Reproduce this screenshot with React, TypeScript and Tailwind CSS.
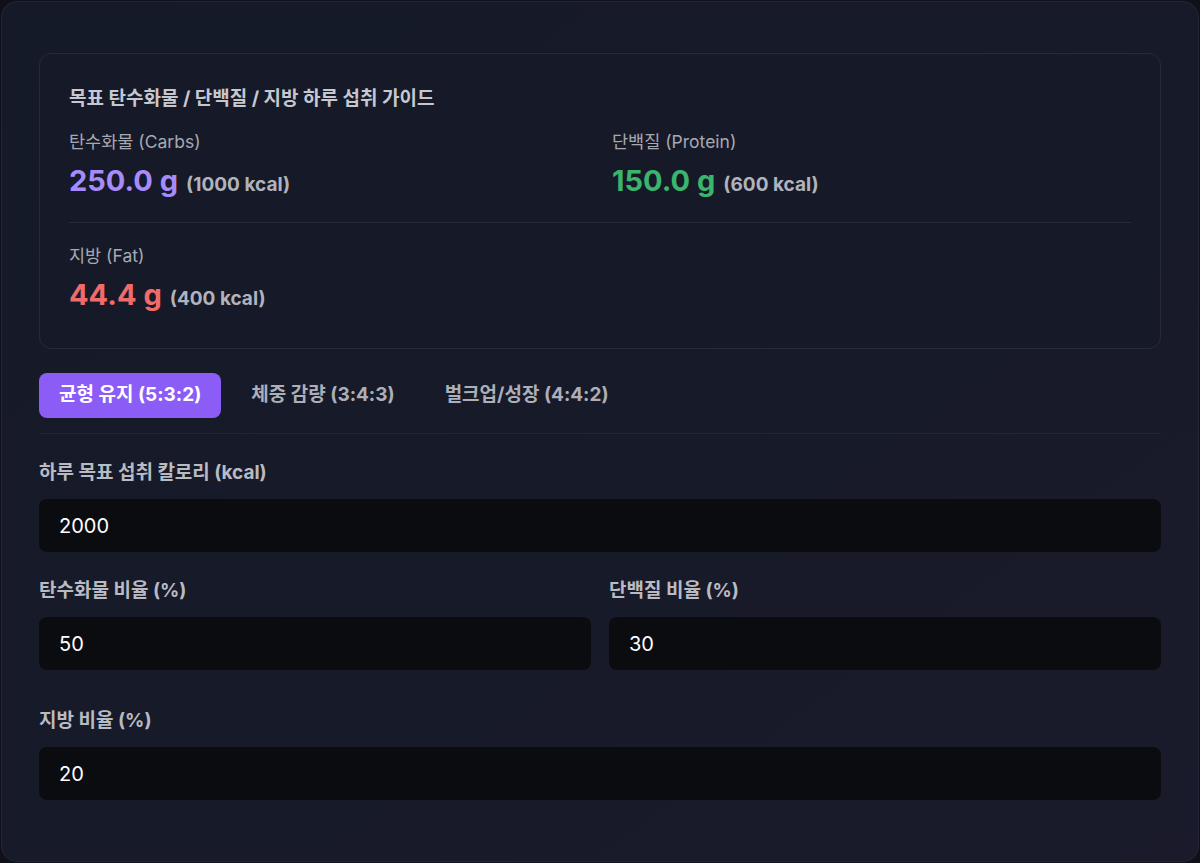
import React, { useState } from "react";

const font = { fontFamily: '"Inter", "Noto Sans CJK KR", "Noto Sans", sans-serif' };

type Preset = { label: string; c: number; p: number; f: number };

const presets: Preset[] = [
  { label: "균형 유지 (5:3:2)", c: 50, p: 30, f: 20 },
  { label: "체중 감량 (3:4:3)", c: 30, p: 40, f: 30 },
  { label: "벌크업/성장 (4:4:2)", c: 40, p: 40, f: 20 },
];

function Macro({ name, grams, kcal, color }: { name: string; grams: number; kcal: number; color: string }) {
  return (
    <div className="flex flex-col">
      <span className="text-[17.5px] leading-7 text-[#a7a9b2]">{name}</span>
      <div className="mt-[7px] flex items-baseline gap-2">
        <span className={`text-[29px] font-bold leading-9 ${color}`}>{grams.toFixed(1)} g</span>
        <span className="text-[19px] font-bold text-[#b1b3bc]">({Math.round(kcal)} kcal)</span>
      </div>
    </div>
  );
}

function Field({ label, value, onChange }: { label: string; value: string; onChange: (v: string) => void }) {
  return (
    <label className="flex flex-col">
      <span className="text-[19px] font-bold leading-7 text-[#b9bbc3]">{label}</span>
      <input
        value={value}
        onChange={(e) => onChange(e.target.value)}
        className="mt-3 h-[53px] w-full rounded-lg bg-[#0b0c10] px-5 text-[20px] text-white outline-none"
      />
    </label>
  );
}

export default function App() {
  const [active, setActive] = useState(0);
  const [kcal, setKcal] = useState("2000");
  const [c, setC] = useState("50");
  const [p, setP] = useState("30");
  const [f, setF] = useState("20");

  const total = Number(kcal) || 0;
  const carbK = (total * (Number(c) || 0)) / 100;
  const protK = (total * (Number(p) || 0)) / 100;
  const fatK = (total * (Number(f) || 0)) / 100;

  const pick = (i: number) => {
    setActive(i);
    setC(String(presets[i].c));
    setP(String(presets[i].p));
    setF(String(presets[i].f));
  };

  return (
    <div className="min-h-[863px] bg-[#0f1019] p-px" style={font}>
      <div className="min-h-[861px] rounded-2xl border border-[#22253a] bg-gradient-to-br from-[#151a28] via-[#171a29] to-[#1a1a2b] px-[37px] pb-[60px] pt-[51px]">
        {/* macro summary */}
        <div className="rounded-xl border border-[#262a3b] bg-[#161a28] px-[29px] pb-[35px] pt-[31px]">
          <h2 className="text-[19px] font-bold leading-7 text-[#c7c8cf]">목표 탄수화물 / 단백질 / 지방 하루 섭취 가이드</h2>
          <div className="mt-[15px] grid grid-cols-2 gap-x-6">
            <div className="pb-[22px]">
              <Macro name="탄수화물 (Carbs)" grams={carbK / 4} kcal={carbK} color="text-[#a78bfa]" />
            </div>
            <div className="pb-[22px]">
              <Macro name="단백질 (Protein)" grams={protK / 4} kcal={protK} color="text-[#3bb56c]" />
            </div>
            <div className="col-span-2 border-t border-[#262a3a] pt-[19px]">
              <Macro name="지방 (Fat)" grams={fatK / 9} kcal={fatK} color="text-[#f26b6b]" />
            </div>
          </div>
        </div>

        {/* preset tabs */}
        <div className="mt-[24px] flex gap-[10px] border-b border-[#23263a] pb-[15px]">
          {presets.map((pr, i) => (
            <button
              key={pr.label}
              onClick={() => pick(i)}
              className={`h-[45px] rounded-lg px-5 text-[19px] font-bold ${
                i === active ? "bg-[#8b5cf6] text-white" : "text-[#adafb8]"
              }`}
            >
              {pr.label}
            </button>
          ))}
        </div>

        <div className="mt-[25px] flex flex-col">
          <Field label="하루 목표 섭취 칼로리 (kcal)" value={kcal} onChange={setKcal} />
          <div className="mt-[25px] grid grid-cols-2 gap-[18px]">
            <Field label="탄수화물 비율 (%)" value={c} onChange={setC} />
            <Field label="단백질 비율 (%)" value={p} onChange={setP} />
          </div>
          <div className="mt-[37px]">
            <Field label="지방 비율 (%)" value={f} onChange={setF} />
          </div>
        </div>
      </div>
    </div>
  );
}
